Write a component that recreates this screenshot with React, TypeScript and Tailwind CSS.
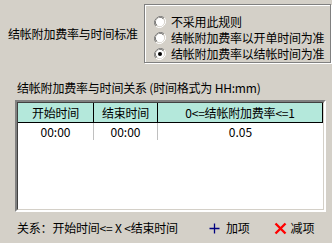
const FONT = { fontFamily: '"Noto Sans CJK SC", "Noto Sans", sans-serif' };

const Radio = ({ checked }: { checked?: boolean }) => (
  <svg width="12" height="12" viewBox="0 0 12 12" className="shrink-0">
    <path d="M10.2 1.8A6 6 0 0 0 1.8 10.2" stroke="#808080" strokeWidth="1" fill="none" />
    <path d="M9.4 2.6A4.9 4.9 0 0 0 2.6 9.4" stroke="#404040" strokeWidth="1" fill="none" />
    <path d="M1.8 10.2A6 6 0 0 0 10.2 1.8" stroke="#ffffff" strokeWidth="1" fill="none" />
    <path d="M2.6 9.4A4.9 4.9 0 0 0 9.4 2.6" stroke="#d4d0c8" strokeWidth="1" fill="none" />
    <circle cx="6" cy="6" r="4.2" fill="#ffffff" />
    {checked && <circle cx="6" cy="6" r="2" fill="#000000" />}
  </svg>
);

const RuleOption = ({ label, checked }: { label: string; checked?: boolean }) => (
  <div className="flex items-center gap-[5px] h-[17.5px]">
    <Radio checked={checked} />
    <span className="text-[12px] leading-[14px] tracking-[-0.2px] text-black whitespace-nowrap">{label}</span>
  </div>
);

export default function App() {
  return (
    <div className="w-[332px] h-[243px] bg-[#d4d0c8] overflow-hidden text-black" style={FONT}>
      <div className="flex pt-[4px]">
        <div className="w-[144px] pl-[8px] flex items-center">
          <span className="text-[12px] leading-[14px] tracking-[-0.2px] whitespace-nowrap">结帐附加费率与时间标准</span>
        </div>
        <div className="w-[187px] h-[59px] border border-[#808080] shadow-[inset_1px_1px_0_#fff,1px_1px_0_#fff] pl-[9px] pt-[9px] flex flex-col">
          <RuleOption label="不采用此规则" />
          <RuleOption label="结帐附加费率以开单时间为准" />
          <RuleOption label="结帐附加费率以结帐时间为准" checked />
        </div>
      </div>

      <div className="pl-[17px] mt-[18px] text-[12px] leading-[14px] tracking-[-0.2px] whitespace-nowrap">
        结帐附加费率与时间关系 (时间格式为 HH:mm)
      </div>

      <div className="ml-[15px] mt-[5px] w-[311px] h-[112px] border-2 border-t-[#808080] border-l-[#808080] border-r-white border-b-white">
        <div className="w-full h-full bg-white border border-t-[#404040] border-l-[#404040] border-r-[#d4d0c8] border-b-[#d4d0c8]">
          <div className="flex h-[20px] bg-[#b4e8db] border-b border-black text-[12px] leading-[14px] tracking-[-0.2px]">
            <div className="w-[76px] flex items-center justify-center border-r border-black">开始时间</div>
            <div className="w-[64px] flex items-center justify-center border-r border-black">结束时间</div>
            <div className="flex-1 flex items-center justify-center border-r border-black">0&lt;=结帐附加费率&lt;=1</div>
          </div>
          <div className="flex h-[17px] text-[12px] leading-[14px]">
            <div className="w-[76px] flex items-center justify-center border-r border-[#c0c0c0]">00:00</div>
            <div className="w-[64px] flex items-center justify-center border-r border-[#c0c0c0]">00:00</div>
            <div className="flex-1 flex items-center justify-center">0.05</div>
          </div>
        </div>
      </div>

      <div className="flex items-center mt-[9px] pl-[17px] h-[14px] text-[12px] leading-[14px] tracking-[-0.2px] whitespace-nowrap">
        <span className="w-[192px]">关系：开始时间&lt;= X &lt;结束时间</span>
        <div className="flex items-center gap-[6px]">
          <svg width="11" height="11" viewBox="0 0 11 11">
            <path d="M5.5 0.5V10.5M0.5 5.5H10.5" stroke="#000080" strokeWidth="1.3" />
          </svg>
          <span>加项</span>
        </div>
        <div className="flex items-center gap-[4px] ml-[24px]">
          <svg width="13" height="13" viewBox="0 0 13 13">
            <path d="M1.5 1.5L11.5 11.5M11.5 1.5L1.5 11.5" stroke="#ff0000" strokeWidth="2.4" />
          </svg>
          <span>减项</span>
        </div>
      </div>
    </div>
  );
}
